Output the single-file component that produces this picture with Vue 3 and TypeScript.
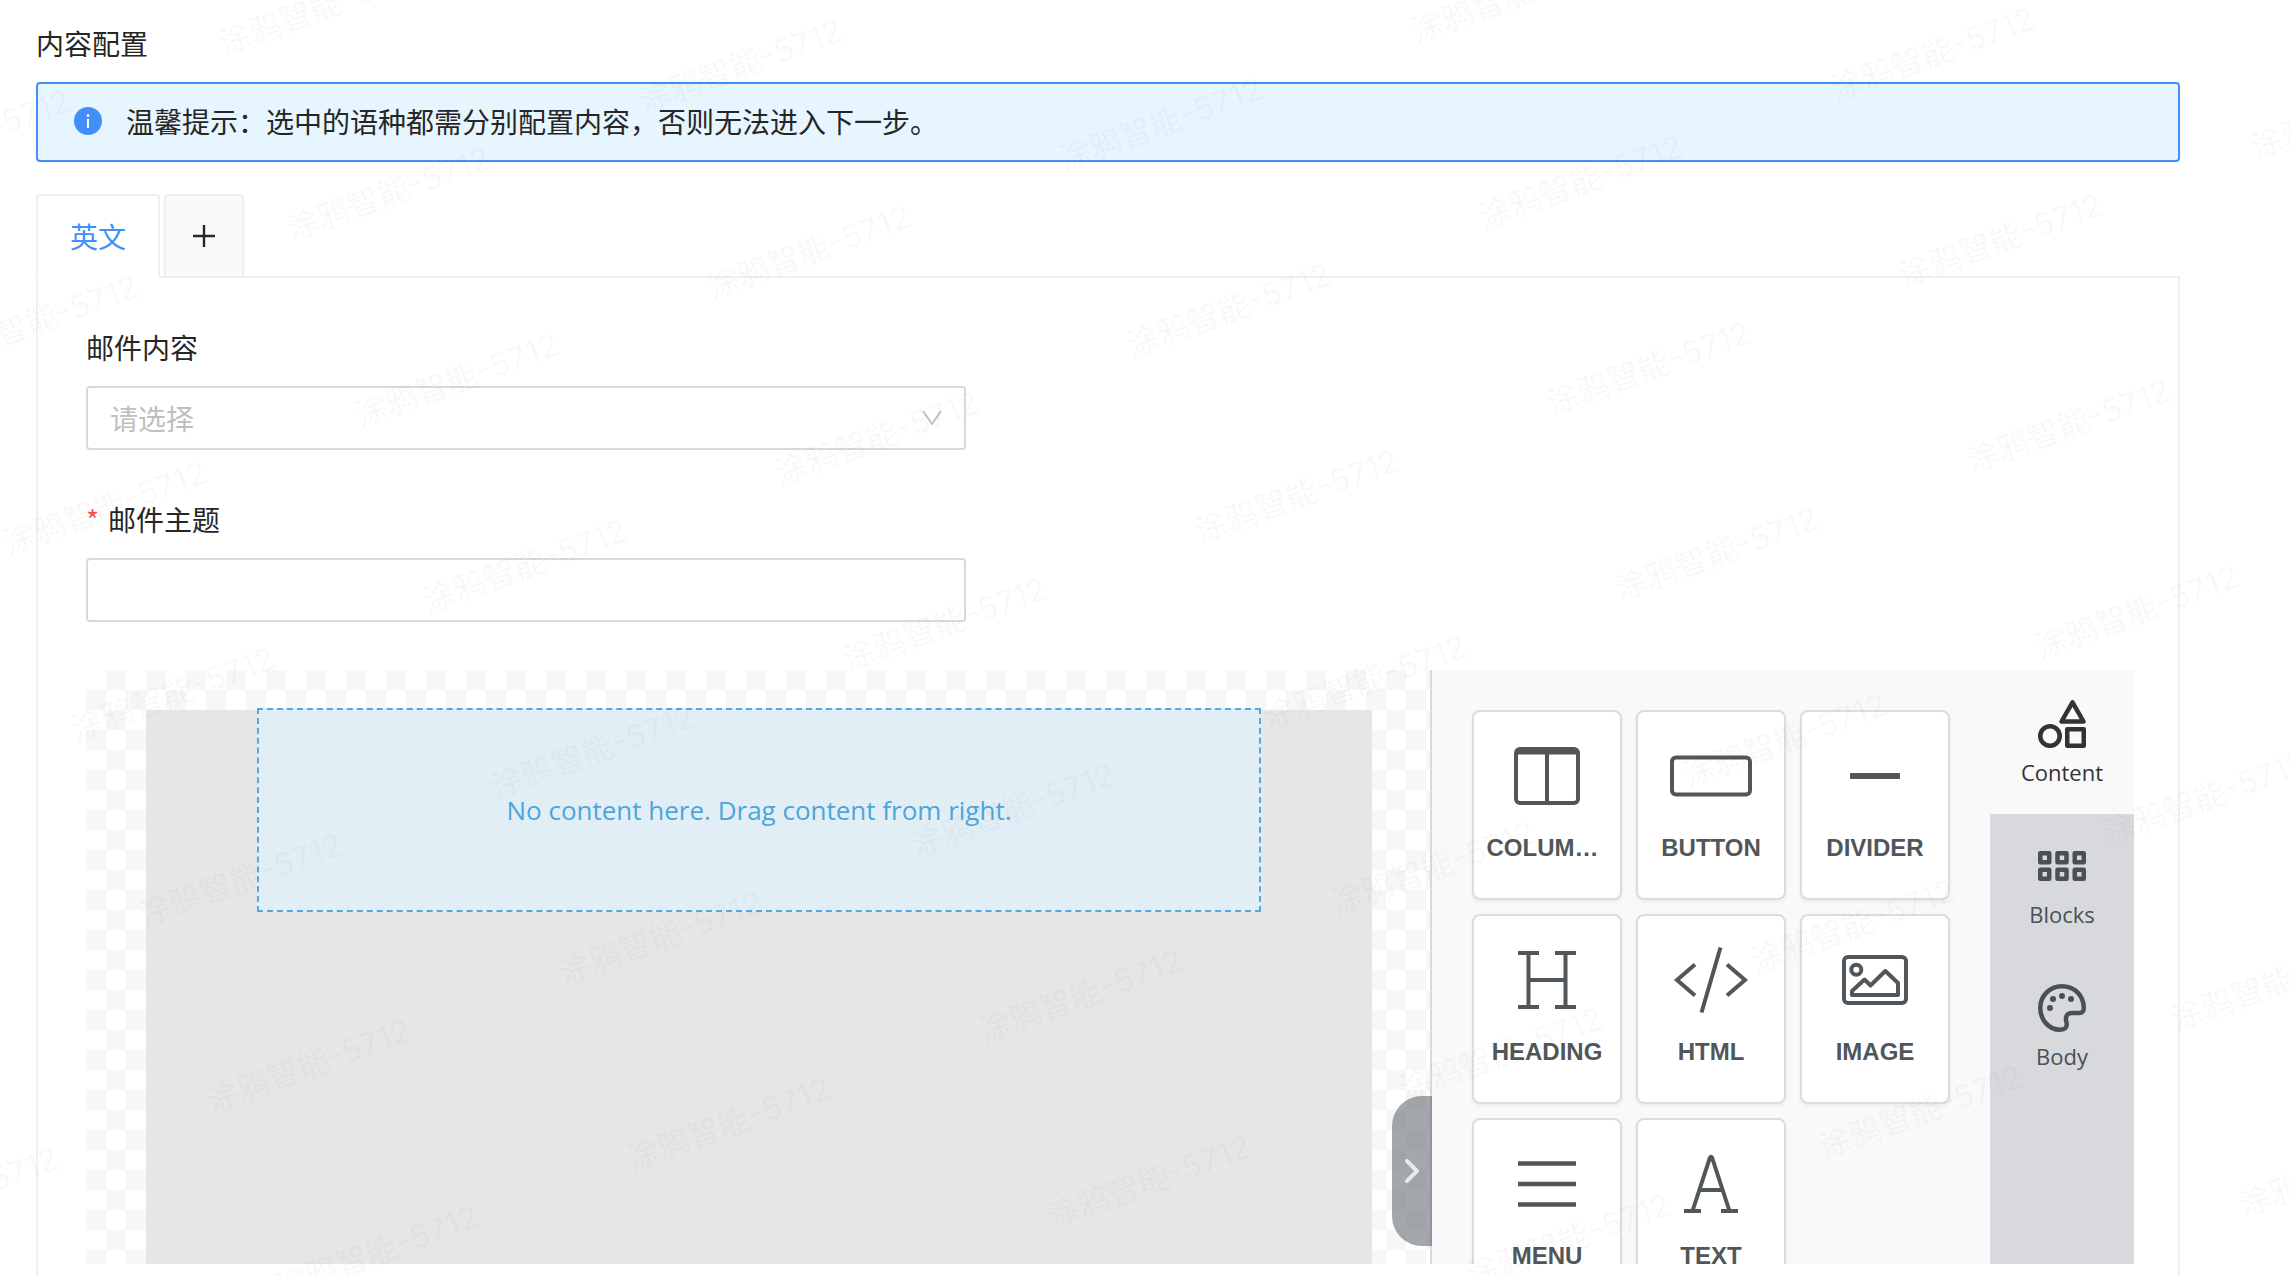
<script setup lang="ts">
import { ref } from 'vue'

interface Tool {
  id: string
  label: string
}

interface Mark {
  x: number
  y: number
}

const tools: Tool[] = [
  { id: 'columns', label: 'COLUMNS' },
  { id: 'button', label: 'BUTTON' },
  { id: 'divider', label: 'DIVIDER' },
  { id: 'heading', label: 'HEADING' },
  { id: 'html', label: 'HTML' },
  { id: 'image', label: 'IMAGE' },
  { id: 'menu', label: 'MENU' },
  { id: 'text', label: 'TEXT' },
]

const sideTabs: Tool[] = [
  { id: 'content', label: 'Content' },
  { id: 'blocks', label: 'Blocks' },
  { id: 'body', label: 'Body' },
]

const activeSide = ref('content')
const template = ref('')
const subject = ref('')

// The watermark repeats on a slanted grid: one step right is (420, 58), one step down is (68, 186).
const marks: Mark[] = []
for (let i = -6; i <= 3; i++) {
  for (let j = -4; j <= 10; j++) {
    const x = 1836 + 420 * i + 68 * j
    const y = 101 + 58 * i + 186 * j
    if (x > -200 && x < 2290 && y > 0 && y < 1340) marks.push({ x, y })
  }
}
</script>

<template>
  <main class="page">
    <h1 class="title">内容配置</h1>

    <div class="alert" role="alert">
      <svg class="alert-icon" viewBox="0 0 28 28" aria-hidden="true">
        <circle cx="14" cy="14" r="14" fill="#418ff7" />
        <circle cx="14" cy="8.5" r="1.5" fill="#fff" />
        <rect x="13" y="12" width="2" height="9" fill="#fff" />
      </svg>
      <span>温馨提示：选中的语种都需分别配置内容，否则无法进入下一步。</span>
    </div>

    <div class="tabs" role="tablist">
      <button class="tab active" type="button" role="tab" aria-selected="true">英文</button>
      <button class="tab add" type="button" aria-label="添加">
        <svg viewBox="0 0 22 22" aria-hidden="true">
          <path d="M11 0V22M0 11H22" fill="none" stroke="#262626" stroke-width="2.4" />
        </svg>
      </button>
    </div>

    <section class="panel">
      <label class="label" for="template">邮件内容</label>
      <div class="select-wrap">
        <select id="template" v-model="template" class="field select">
          <option value="">请选择</option>
        </select>
        <svg class="arrow" viewBox="0 0 20 14" aria-hidden="true">
          <path d="M1 0L10 13L19 0" fill="none" stroke="#bfbfbf" stroke-width="2" />
        </svg>
      </div>

      <label class="label" for="subject"><span class="star">*</span>邮件主题</label>
      <input id="subject" v-model="subject" class="field" type="text" />

      <div class="editor">
        <div class="stage">
          <div class="canvas">
            <div class="drop">No content here. Drag content from right.</div>
          </div>
          <button class="handle" type="button" aria-label="收起">
            <svg viewBox="0 0 14 24" aria-hidden="true">
              <path d="M2 2L12 12L2 22" fill="none" stroke="#e8e9eb" stroke-width="4" stroke-linecap="round" stroke-linejoin="round" />
            </svg>
          </button>
        </div>

        <div class="tools">
          <button v-for="tool in tools" :key="tool.id" class="tool" type="button">
            <svg class="tool-icon" viewBox="0 0 84 68" fill="none" stroke="currentColor" stroke-width="4" aria-hidden="true">
              <g v-if="tool.id === 'columns'">
                <rect x="11" y="7" width="62" height="54" rx="4" />
                <path d="M42 10V61M11 10.5H73" />
              </g>
              <rect v-else-if="tool.id === 'button'" x="3" y="15.5" width="78" height="37" rx="4" />
              <rect v-else-if="tool.id === 'divider'" x="17" y="31" width="50" height="6" rx="1" fill="currentColor" stroke="none" />
              <path v-else-if="tool.id === 'heading'" d="M13 7H34M50 7H71M13 61H34M50 61H71M23.5 7V61M60.5 7V61M23.5 34H60.5" />
              <path v-else-if="tool.id === 'html'" d="M26 18.5L8 34L26 49.5M58 18.5L76 34L58 49.5M51.5 1.5L32.5 66.5" />
              <g v-else-if="tool.id === 'image'">
                <rect x="11" y="11" width="62" height="46" rx="4" />
                <circle cx="23.3" cy="23.7" r="5" />
                <path d="M19 49V45L31.5 33.5L37.5 39.5L52.3 25L65 37V49Z" stroke-linejoin="round" />
              </g>
              <path v-else-if="tool.id === 'menu'" stroke-width="4.5" d="M13 13.5H71M13 34H71M13 54.5H71" />
              <path v-else d="M23.5 61L41 7.5Q42 6 43 7.5L60.5 61M30.5 40H53.5M15 61H32M52 61H69" />
            </svg>
            <span class="tool-label">{{ tool.label }}</span>
          </button>
        </div>

        <nav class="side" role="tablist">
          <button
            v-for="tab in sideTabs"
            :key="tab.id"
            class="side-tab"
            :class="{ current: activeSide === tab.id }"
            type="button"
            role="tab"
            :aria-selected="activeSide === tab.id"
            @click="activeSide = tab.id"
          >
            <svg class="side-icon" viewBox="0 0 48 48" fill="none" stroke="currentColor" stroke-width="4" aria-hidden="true">
              <g v-if="tab.id === 'content'" stroke-width="4.5" stroke-linejoin="round">
                <circle cx="12" cy="36" r="9.75" />
                <rect x="29.25" y="29.25" width="16.5" height="16.5" />
                <path d="M34.5 2.3L45.5 21.5H23.5Z" />
              </g>
              <g v-else-if="tab.id === 'blocks'" stroke-width="4.5" stroke-linejoin="round">
                <rect x="2.25" y="11.25" width="9" height="9" />
                <rect x="19.5" y="11.25" width="9" height="9" />
                <rect x="36.75" y="11.25" width="9" height="9" />
                <rect x="2.25" y="27.75" width="9" height="9" />
                <rect x="19.5" y="27.75" width="9" height="9" />
                <rect x="36.75" y="27.75" width="9" height="9" />
              </g>
              <g v-else>
                <path stroke-width="4.5" d="M45.75 24C45.75 11.5 36.5 2.25 24 2.25S2.25 12 2.25 24C2.25 36 11 45.75 22 45.75C27 45.75 29.5 43.5 28.5 38.5C27 33 28.5 29 34 29H41C44.5 29 45.75 27.5 45.75 24Z" />
                <g fill="currentColor" stroke="none">
                  <circle cx="12" cy="24" r="3" />
                  <circle cx="15" cy="15" r="3" />
                  <circle cx="24" cy="12" r="3" />
                  <circle cx="33" cy="15" r="3" />
                </g>
              </g>
            </svg>
            <span>{{ tab.label }}</span>
          </button>
        </nav>
      </div>
    </section>

    <svg class="watermark" aria-hidden="true">
      <text v-for="(m, n) in marks" :key="n" :transform="`translate(${m.x} ${m.y}) rotate(-20)`">涂鸦智能-5712</text>
    </svg>
  </main>
</template>

<style>
body {
  margin: 0;
  background: #fff;
}
</style>

<style scoped>
.page {
  position: relative;
  box-sizing: border-box;
  display: flex;
  flex-direction: column;
  height: 100vh;
  padding: 22px 110px 0 36px;
  overflow: hidden;
  color: #262626;
  font-family: "Noto Sans CJK SC", "Liberation Sans", sans-serif;
  font-size: 28px;
  line-height: 42px;
}

button {
  margin: 0;
  padding: 0;
  border: 0;
  background: none;
  color: inherit;
  font: inherit;
  cursor: pointer;
}

.title {
  margin: 0 0 18px;
  font-size: 28px;
  font-weight: 400;
}

.alert {
  display: flex;
  align-items: center;
  gap: 24px;
  padding: 16px 36px 18px;
  border: 2px solid #418ff7;
  border-radius: 4px;
  background: #e7f5fe;
}

.alert-icon {
  width: 28px;
  height: 28px;
}

.tabs {
  display: flex;
  gap: 4px;
  margin-top: 32px;
  border-bottom: 2px solid #f0f0f0;
}

.tab {
  box-sizing: border-box;
  display: flex;
  align-items: center;
  justify-content: center;
  height: 84px;
  margin-bottom: -2px;
  padding: 0 32px;
  border: 2px solid #f0f0f0;
  border-radius: 4px 4px 0 0;
}

.tab.active {
  border-bottom-color: #fff;
  background: #fff;
  color: #418ff7;
}

.tab.add {
  width: 80px;
  padding: 0;
  background: #fafafa;
}

.tab.add svg {
  width: 22px;
  height: 22px;
}

.panel {
  display: flex;
  flex: 1;
  flex-direction: column;
  min-height: 0;
  padding: 48px 44px 12px 48px;
  border: solid #f0f0f0;
  border-width: 0 2px;
}

.label {
  margin-bottom: 18px;
}

.star {
  display: inline-block;
  width: 22px;
  color: #ff4d4f;
}

.field {
  box-sizing: border-box;
  width: 880px;
  max-width: 100%;
  height: 64px;
  margin: 0 0 48px;
  padding: 0 22px;
  border: 2px solid #d9d9d9;
  border-radius: 4px;
  background: #fff;
  color: #262626;
  font: inherit;
}

.select-wrap {
  position: relative;
  width: 880px;
  max-width: 100%;
  height: 64px;
  margin-bottom: 48px;
}

.select {
  width: 100%;
  margin: 0;
  color: #bfbfbf;
  appearance: none;
}

.arrow {
  position: absolute;
  top: 25px;
  right: 24px;
  width: 20px;
  height: 14px;
  pointer-events: none;
}

.editor {
  display: flex;
  flex: 1;
  min-height: 0;
  overflow: hidden;
}

.stage {
  position: relative;
  display: flex;
  flex: 1;
  min-width: 0;
  padding: 40px 58px 0 60px;
  background: repeating-conic-gradient(#f7f7f7 0 25%, #fff 0 50%) 0 0 / 40px 40px;
}

.canvas {
  display: flex;
  flex: 1;
  align-items: flex-start;
  justify-content: center;
  background: #e6e6e6;
}

.drop {
  box-sizing: border-box;
  width: 1004px;
  max-width: 100%;
  margin-top: -2px;
  padding: 80px 0;
  border: 2px dashed #55a8d8;
  background: #e1eef6;
  color: #4ca6da;
  font-family: "Open Sans", sans-serif;
  font-size: 26px;
  line-height: 40px;
  text-align: center;
}

.handle {
  position: absolute;
  right: -2px;
  bottom: 18px;
  z-index: 1;
  display: flex;
  align-items: center;
  justify-content: center;
  width: 40px;
  height: 150px;
  border-radius: 30px 0 0 30px;
  background: rgba(73, 80, 87, 0.5);
}

.handle svg {
  width: 14px;
  height: 24px;
}

.tools {
  display: grid;
  grid-template-columns: repeat(3, 150px);
  align-content: start;
  gap: 14px;
  padding: 40px;
  border-left: 2px solid #d8d9dd;
  background: #f9f9f9;
}

.tool {
  box-sizing: border-box;
  display: flex;
  flex-direction: column;
  align-items: center;
  height: 190px;
  padding: 30px 12px 0;
  border: 2px solid #dcdcdc;
  border-radius: 8px;
  background: #fff;
  box-shadow: 0 2px 4px rgba(0, 0, 0, 0.06);
  color: #505659;
}

.tool-icon {
  width: 84px;
  height: 68px;
}

.tool-label {
  max-width: 121px;
  margin-top: 24px;
  overflow: hidden;
  font-family: "Liberation Sans", sans-serif;
  font-size: 24px;
  font-weight: 700;
  line-height: 28px;
  text-overflow: ellipsis;
  white-space: nowrap;
}

.side {
  width: 144px;
  background: #d8d9dd;
}

.side-tab {
  display: flex;
  flex-direction: column;
  align-items: center;
  gap: 8px;
  width: 100%;
  height: 142px;
  padding-top: 28px;
  box-sizing: border-box;
  color: #495057;
  font-family: "Open Sans", sans-serif;
  font-size: 22px;
  line-height: 32px;
}

.side-tab.current {
  height: 144px;
  padding-top: 30px;
  background: #f9f9f9;
  color: #333;
}

.side-icon {
  width: 48px;
  height: 48px;
}

.watermark {
  position: absolute;
  inset: 0;
  z-index: 2;
  width: 100%;
  height: 100%;
  fill: rgba(50, 50, 50, 0.03);
  font-family: Inter, "Noto Sans CJK SC", sans-serif;
  font-size: 32px;
  font-weight: 500;
  pointer-events: none;
}
</style>
